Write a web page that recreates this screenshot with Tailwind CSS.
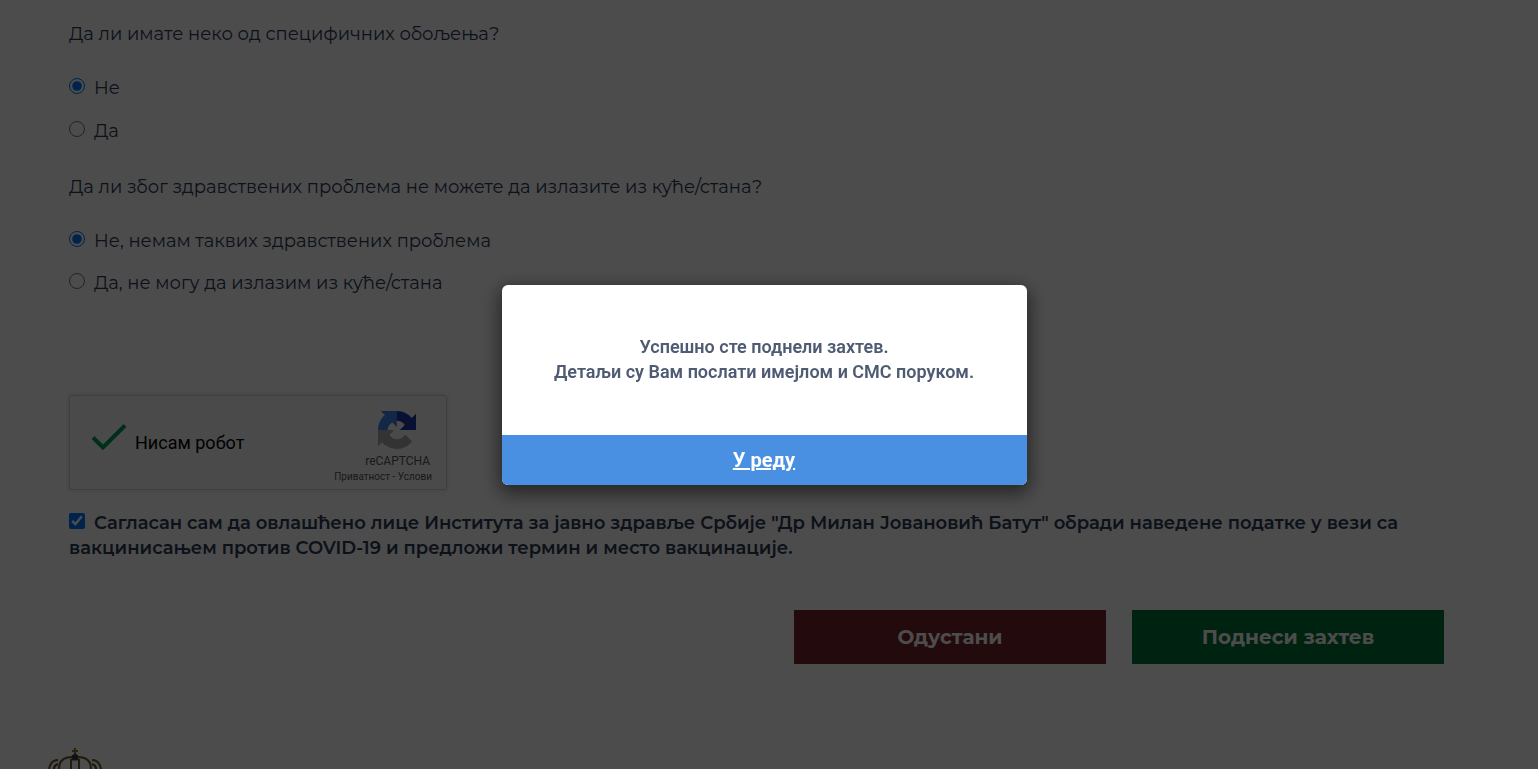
<!DOCTYPE html>
<html lang="sr">
<head>
<meta charset="utf-8">
<title>Пријава за вакцинацију</title>
<script src="https://cdn.jsdelivr.net/npm/@tailwindcss/browser@4"></script>
</head>
<body class="h-screen overflow-hidden bg-white font-['Montserrat','Inter',sans-serif] text-lg leading-[25px] text-[#2c3a56]">
<main class="flex flex-col pt-[22px] pr-[94px] pl-[69px]">
  <form class="flex flex-col">
    <fieldset class="flex flex-col">
      <legend class="mb-[29px]">Да ли имате неко од специфичних обољења?</legend>
      <div class="flex flex-col items-start gap-[18px]">
        <label class="flex items-start gap-[9px]"><input type="radio" name="bolest" checked class="mt-[2px] size-4">Не</label>
        <label class="flex items-start gap-[9px]"><input type="radio" name="bolest" class="mt-[2px] size-4">Да</label>
      </div>
    </fieldset>
    <fieldset class="mt-[31px] flex flex-col">
      <legend class="mb-[29px]">Да ли због здравствених проблема не можете да излазите из куће/стана?</legend>
      <div class="flex flex-col items-start gap-[17px]">
        <label class="flex items-start gap-[9px]"><input type="radio" name="izlazak" checked class="mt-[2px] size-4">Не, немам таквих здравствених проблема</label>
        <label class="flex items-start gap-[9px]"><input type="radio" name="izlazak" class="mt-[2px] size-4">Да, не могу да излазим из куће/стана</label>
      </div>
    </fieldset>
    <section class="mt-[99px] flex h-[95px] w-[378px] items-center rounded-[3px] border border-[#d3d3d3] bg-[#f9f9f9] pl-[21px] pr-[14px] font-[Roboto,sans-serif] text-black shadow-[0_0_4px_1px_rgba(0,0,0,0.1)]" aria-label="reCAPTCHA">
      <svg class="mb-3 h-7 w-9" viewBox="0 0 36 28" fill="none" stroke="#009e55" stroke-width="4"><path d="M2 14.500 12 24.500 34 2.500"/></svg>
      <span class="ml-2 text-lg leading-[25px]">Нисам робот</span>
      <div class="ml-auto flex flex-col items-end pt-2 text-[#555]">
        <svg class="mr-4 mb-0.5 size-[38px]" viewBox="0 0 64 64"><path fill="#1c3aa9" d="M64 31.955l-.033-1.370V4.687l-7.160 7.160C50.948 4.674 42.033.093 32.050.093c-10.400 0-19.622 4.960-25.458 12.640l11.736 11.860a15.550 15.550 0 0 1 4.754-5.334c2.050-1.600 4.952-2.906 8.968-2.906.485 0 .860.057 1.135.163 4.976.393 9.288 3.140 11.828 7.124l-8.307 8.307L64 31.953"/><path fill="#4285f4" d="M31.862.094l-1.370.033H4.594l7.160 7.160C4.580 13.147 0 22.060 0 32.046c0 10.400 4.960 19.622 12.640 25.458L24.500 45.768a15.550 15.550 0 0 1-5.334-4.754c-1.600-2.050-2.906-4.952-2.906-8.968 0-.485.057-.860.163-1.135.393-4.976 3.140-9.288 7.124-11.828l8.307 8.307L31.860.095"/><path fill="#ababab" d="M.001 32.045l.033 1.370v25.898l7.160-7.160c5.860 7.173 14.774 11.754 24.760 11.754 10.400 0 19.622-4.960 25.458-12.640l-11.736-11.860a15.550 15.550 0 0 1-4.754 5.334c-2.050 1.600-4.952 2.906-8.968 2.906-.485 0-.860-.057-1.135-.163-4.976-.393-9.288-3.140-11.828-7.124l8.307-8.307c-10.522.040-22.400.066-27.295-.005"/></svg>
        <span class="mr-0.5 text-xs leading-5">reCAPTCHA</span>
        <span class="text-[10px] leading-3"><a href="#">Приватност</a> - <a href="#">Услови</a></span>
      </div>
    </section>
    <label class="mt-[21px] font-semibold"><input type="checkbox" checked class="mr-[9px] size-4">Сагласан сам да овлашћено лице Института за јавно здравље Србије "Др Милан Јовановић Батут" обради наведене податке у вези са вакцинисањем против COVID-19 и предложи термин и место вакцинације.</label>
    <div class="mt-[49px] flex justify-end gap-[26px] text-xl font-bold text-white">
      <button type="button" class="h-[54px] w-[312px] bg-[#75222b]">Одустани</button>
      <button type="submit" class="h-[54px] w-[312px] bg-[#007236]">Поднеси захтев</button>
    </div>
  </form>
  <footer class="-ml-[22px] mt-[83px]">
    <svg class="block h-[22px] w-14" viewBox="0 0 56 22" fill="none" stroke="#6f5a2c" stroke-width="2">
      <path d="M28 1v6M25 4h6" stroke="#8c7233"/>
      <path d="M25 10C17 10 12 13 12 22M31 10c8 0 13 3 13 12M11 13C6 13 3 17 2 22M45 13c5 0 8 4 9 9M24 12v10M32 12v10"/>
      <path stroke="#59502f" d="M11 17c-3 1-4 3-4 5M45 17c3 1 4 3 4 5"/>
      <path fill="#283858" stroke="#59502f" stroke-width="1" d="M25 13V9q3-4 6 0v4z"/>
    </svg>
  </footer>
</main>
<div class="fixed inset-0 flex items-center justify-center bg-black/70 pr-[10px]">
  <div role="dialog" aria-modal="true" class="flex w-[525px] flex-col overflow-hidden rounded-md bg-white font-[Roboto,sans-serif] shadow-[0_6px_18px_3px_rgba(0,0,0,0.5)]">
    <p class="px-6 pt-[49px] pb-[51px] text-center text-lg leading-[25px] font-semibold text-[#4f5b73]">Успешно сте поднели захтев.<br>Детаљи су Вам послати имејлом и СМС поруком.</p>
    <button type="button" class="h-[50px] bg-[#4a90e2] text-xl font-bold text-white underline">У реду</button>
  </div>
</div>
</body>
</html>
